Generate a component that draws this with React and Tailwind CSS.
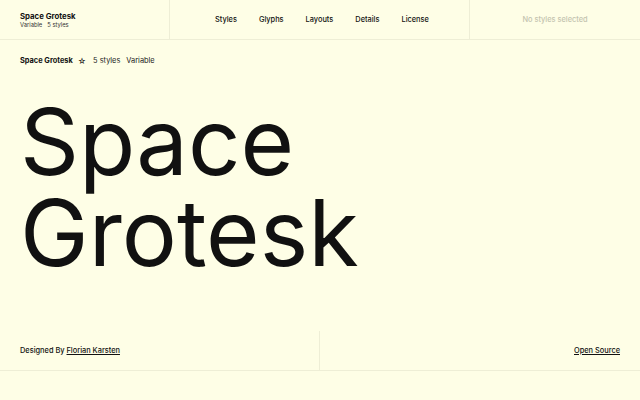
const navItems = ["Styles", "Glyphs", "Layouts", "Details", "License"];

const App = () => {
  return (
    <div className="w-[640px] h-[400px] overflow-hidden bg-[#fefee6] text-[#111111] font-['Inter',sans-serif]">
      {/* Top bar */}
      <div className="flex h-10 border-b border-[#eeeed6]">
        <div className="w-[170px] border-r border-[#eeeed6] pl-5 flex flex-col justify-center">
          <p className="text-[7.8px] font-bold leading-[10px]">Space Grotesk</p>
          <p className="text-[5.8px] leading-[8px] text-[#333] flex gap-[5px]">
            <span>Variable</span>
            <span>5 styles</span>
          </p>
        </div>
        <nav className="w-[300px] border-r border-[#eeeed6] flex items-center pt-[1px] pl-[45px] gap-[22px] text-[7.4px] font-medium">
          {navItems.map((item) => (
            <span key={item}>{item}</span>
          ))}
        </nav>
        <div className="flex-1 flex items-center justify-center pt-[1px] text-[7.4px] font-medium text-[#c4c4b0]">
          No styles selected
        </div>
      </div>

      {/* Family info */}
      <div className="flex items-center h-[42px] pl-5 text-[7.4px]">
        <span className="font-bold">Space Grotesk</span>
        <span className="ml-[5px] text-[8px] leading-none">☆</span>
        <span className="ml-[7px] text-[#222]">5 styles</span>
        <span className="ml-[6px] text-[#222]">Variable</span>
      </div>

      {/* Specimen */}
      <div className="pl-[20px] pt-[14px] h-[249px]">
        <h1 className="text-[92px] leading-[91px] font-normal tracking-[0px]">
          <span className="block">Space</span>
          <span className="block">Grotesk</span>
        </h1>
      </div>

      {/* Footer */}
      <div className="flex h-10 border-b border-[#eeeed6]">
        <div className="w-[320px] border-r border-[#eeeed6] pl-5 flex items-center text-[7.4px] font-medium">
          Designed By&nbsp;<a className="underline">Florian Karsten</a>
        </div>
        <div className="flex-1 pr-5 flex items-center justify-end text-[7.4px] font-medium">
          <a className="underline">Open Source</a>
        </div>
      </div>
    </div>
  );
};

export default App;
